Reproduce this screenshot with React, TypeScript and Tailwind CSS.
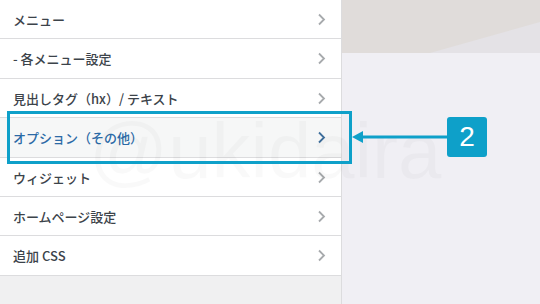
import React from 'react'

type Item = { label: string, h: string, active?: boolean }

const items: Item[] = [
    { label: 'メニュー', h: 'h-[39px]' },
    { label: '- 各メニュー設定', h: 'h-[40px]' },
    { label: '見出しタグ（hx）/ テキスト', h: 'h-[39px]' },
    { label: 'オプション（その他）', h: 'h-[40px]', active: true },
    { label: 'ウィジェット', h: 'h-[39px]' },
    { label: 'ホームページ設定', h: 'h-[39px]' },
    { label: '追加 CSS', h: 'h-[40px]' },
]

const Chevron = ({ active }: { active?: boolean }) => (
    <svg width="9" height="13" viewBox="0 0 9 13" className="shrink-0">
        <polyline points="2,1.5 7,6.5 2,11.5" fill="none" stroke={active ? '#3f6f9c' : '#a7aaad'} strokeWidth="1.8" />
    </svg>
)

export default function App() {
    return (
        <div className="relative w-[540px] h-[304px] overflow-hidden bg-[#f0eff4] flex" style={{ fontFamily: '"Noto Sans CJK JP", "Noto Sans", sans-serif' }}>
            {/* customizer panel */}
            <div className="w-[342px] h-full bg-[#f0f0f1] border-r border-[#dcdcde] flex flex-col shrink-0">
                {items.map((item) => (
                    <div
                        key={item.label}
                        className={`${item.h} flex items-center justify-between pl-[13px] pr-[15px] border-b border-[#dcdcde] ${item.active ? 'bg-[#f6f7f7] text-[#2b6aa6]' : 'bg-white text-[#3c434a]'}`}
                    >
                        <span className="text-[13px] leading-none font-medium">{item.label}</span>
                        <Chevron active={item.active} />
                    </div>
                ))}
            </div>

            {/* preview side */}
            <div className="flex-1 flex flex-col">
                <div className="relative h-[53px] bg-[#e0dcda] overflow-hidden">
                    <svg className="absolute inset-0" width="198" height="53" viewBox="0 0 198 53">
                        <polygon points="88,53 198,22 198,53" fill="#e4e2e6" />
                    </svg>
                </div>
            </div>

            {/* watermark */}
            <div className="absolute left-[89px] top-[112px] text-[78px] leading-none text-black/[0.025] pointer-events-none" style={{ fontFamily: '"Liberation Sans", sans-serif' }}>
                @ukidaira
            </div>

            {/* highlight */}
            <div className="absolute left-[7px] top-[111px] w-[345px] h-[53px] border-[3px] border-[#0ea0c9]" />

            {/* arrow */}
            <svg className="absolute left-[350px] top-[130px]" width="100" height="14" viewBox="0 0 100 14">
                <polygon points="2,7 13,1 13,13" fill="#0ea0c9" />
                <rect x="12" y="5.5" width="88" height="3" fill="#0ea0c9" />
            </svg>

            {/* badge */}
            <div className="absolute left-[447px] top-[117px] w-[40px] h-[40px] rounded-[3px] bg-[#0ea0c9] flex items-center justify-center text-white text-[28px] leading-none" style={{ fontFamily: '"Liberation Sans", sans-serif' }}>
                2
            </div>
        </div>
    )
}
